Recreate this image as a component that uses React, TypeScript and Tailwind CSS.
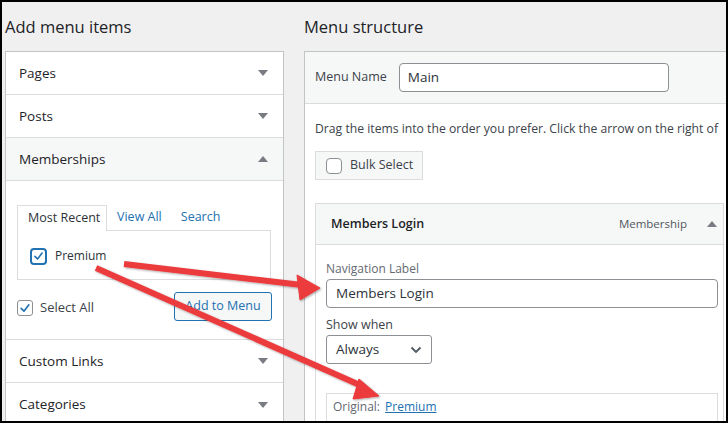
import React from "react";

const font = { fontFamily: '"Open Sans", "Noto Sans", sans-serif' };

function Caret({ up = false }: { up?: boolean }) {
  return (
    <svg width="10" height="6" viewBox="0 0 10 6" className="fill-[#787c82]">
      {up ? <path d="M0 6 L5 0 L10 6 Z" /> : <path d="M0 0 L10 0 L5 6 Z" />}
    </svg>
  );
}

function Check({ className }: { className?: string }) {
  return (
    <svg viewBox="0 0 20 20" className={className} fill="none">
      <path
        d="M4.5 10.5 L8.5 14.5 L15.5 5.5"
        stroke="#2271b1"
        strokeWidth="2.4"
        strokeLinecap="round"
        strokeLinejoin="round"
      />
    </svg>
  );
}

function SectionRow({
  label,
  open = false,
  last = false,
}: {
  label: string;
  open?: boolean;
  last?: boolean;
}) {
  return (
    <div
      className={`flex h-[43px] items-center justify-between pl-[13px] pr-[15px] ${
        last ? "" : "border-b border-[#dcdcde]"
      } ${open ? "bg-[#f6f7f7]" : "bg-white"}`}
    >
      <span className="text-[13.5px] font-medium text-[#1d2327]">{label}</span>
      <Caret up={open} />
    </div>
  );
}

function Arrows() {
  return (
    <svg
      className="pointer-events-none absolute left-0 top-0"
      width="728"
      height="423"
      viewBox="0 0 728 423"
    >
      <defs>
        <filter id="sh" x="-10%" y="-10%" width="120%" height="120%">
          <feDropShadow dx="1" dy="1" stdDeviation="0.8" floodColor="#000" floodOpacity="0.35" />
        </filter>
      </defs>
      <g filter="url(#sh)" fill="#ec3a3c" stroke="#ec3a3c">
        <line x1="122" y1="262" x2="300" y2="283" strokeWidth="6" />
        <path d="M318 286 L295 273 L298 298 Z" strokeWidth="1" />
        <line x1="94" y1="266" x2="360" y2="384" strokeWidth="6" />
        <path d="M377 394 L357 377 L351 397 Z" strokeWidth="1" />
      </g>
    </svg>
  );
}

export default function App() {
  return (
    <div
      className="relative box-border h-[423px] w-[728px] overflow-hidden border-2 border-black bg-[#f0f0f1] text-[#2c3338]"
      style={font}
    >
      <div className="flex gap-[20px] pl-[3px] pt-[10px]">
        {/* Left column */}
        <div className="w-[279px] shrink-0">
          <h2 className="h-[39px] text-[16.5px] leading-[30px] text-[#1d2327]">Add menu items</h2>
          <div className="border border-[#c3c4c7] bg-white">
            <SectionRow label="Pages" />
            <SectionRow label="Posts" />
            <SectionRow label="Memberships" open />
            <div className="border-b border-[#dcdcde] px-[11px] pb-[18px] pt-[24px]">
              <div className="flex h-[25px] items-end text-[12.5px]">
                <div className="-mb-px flex h-[26px] w-[90px] items-center border border-b-0 border-[#dcdcde] bg-white pl-[10px] text-[#2c3338]">
                  Most Recent
                </div>
                <span className="flex h-[25px] items-center pl-[10px] text-[#2271b1]">View All</span>
                <span className="flex h-[25px] items-center pl-[19px] text-[#2271b1]">Search</span>
              </div>
              <div className="h-[50px] w-[254px] border border-[#dcdcde] pl-[12px] pt-[16px]">
                <div className="flex items-center gap-[8px]">
                  <span className="flex h-[17px] w-[17px] items-center justify-center rounded-[4px] border-2 border-[#2271b1] bg-white">
                    <Check className="h-[14px] w-[14px]" />
                  </span>
                  <span className="text-[12px] text-[#2c3338]">Premium</span>
                </div>
              </div>
              <div className="mt-[12px] flex h-[29px] items-center justify-between">
                <div className="flex items-center gap-[7px] pt-[2px]">
                  <span className="flex h-[16px] w-[16px] items-center justify-center rounded-[3px] border border-[#8c8f94] bg-white">
                    <Check className="h-[14px] w-[14px]" />
                  </span>
                  <span className="text-[13px] text-[#3c434a]">Select All</span>
                </div>
                <div className="flex h-[29px] w-[98px] items-center justify-center rounded-[3px] border border-[#2271b1] bg-[#f6f7f7] text-[12.5px] text-[#2271b1]">
                  Add to Menu
                </div>
              </div>
            </div>
            <SectionRow label="Custom Links" />
            <SectionRow label="Categories" last />
          </div>
        </div>

        {/* Right column */}
        <div className="flex-1">
          <h2 className="h-[39px] text-[16.5px] font-medium leading-[30px] text-[#1d2327]">Menu structure</h2>
          <div className="h-[400px] border-l border-t border-[#c3c4c7] bg-white">
            <div className="flex h-[52px] items-center gap-[12px] border-b border-[#dcdcde] bg-[#f6f7f7] pl-[10px]">
              <span className="text-[12.5px] text-[#3c434a]">Menu Name</span>
              <div className="flex h-[29px] w-[270px] items-center rounded-[4px] border border-[#8c8f94] bg-white pl-[8px] text-[13.5px] text-[#2c3338]">
                Main
              </div>
            </div>
            <div className="pl-[10px] pt-[15px]">
              <p className="whitespace-nowrap text-[12.2px] leading-[20px] text-[#3c434a]">
                Drag the items into the order you prefer. Click the arrow on the right of
              </p>
              <div className="mt-[12px] flex h-[29px] w-[108px] items-center gap-[8px] border border-[#dcdcde] bg-[#f6f7f7] pl-[10px]">
                <span className="h-[16px] w-[16px] rounded-[4px] border border-[#8c8f94] bg-white" />
                <span className="text-[12.5px] text-[#3c434a]">Bulk Select</span>
              </div>
              <div className="mt-[23px] w-[409px] border border-[#dcdcde]">
                <div className="flex h-[41px] items-center justify-between border-b border-[#dcdcde] bg-[#f6f7f7] pl-[15px] pr-[6px]">
                  <span className="text-[12.5px] font-semibold text-[#1d2327]">Members Login</span>
                  <div className="flex items-center gap-[20px]">
                    <span className="text-[11.5px] text-[#50575e]">Membership</span>
                    <Caret up />
                  </div>
                </div>
                <div className="bg-white pl-[10px] pr-[6px] pt-[15px]">
                  <div className="text-[12px] leading-[18px] text-[#646970]">Navigation Label</div>
                  <div className="mt-[1px] flex h-[29px] w-[392px] items-center rounded-[4px] border border-[#8c8f94] bg-white pl-[9px] text-[13.5px] text-[#2c3338]">
                    Members Login
                  </div>
                  <div className="mt-[8px] text-[12.5px] leading-[18px] text-[#3c434a]">Show when</div>
                  <div className="mt-[1px] flex h-[29px] w-[106px] items-center justify-between rounded-[3px] border border-[#8c8f94] bg-white pl-[9px] pr-[9px] text-[13.5px] text-[#2c3338]">
                    <span>Always</span>
                    <svg width="12" height="8" viewBox="0 0 12 8" fill="none">
                      <path d="M1.5 1.5 L6 6 L10.5 1.5" stroke="#50575e" strokeWidth="1.8" />
                    </svg>
                  </div>
                  <div className="mt-[29px] flex h-[40px] w-[392px] items-start gap-[5px] border border-[#dcdcde] pl-[6px] pt-[4px] text-[12px]">
                    <span className="text-[#646970]">Original:</span>
                    <span className="text-[#2271b1] underline">Premium</span>
                  </div>
                </div>
              </div>
            </div>
          </div>
        </div>
      </div>
      <Arrows />
    </div>
  );
}
